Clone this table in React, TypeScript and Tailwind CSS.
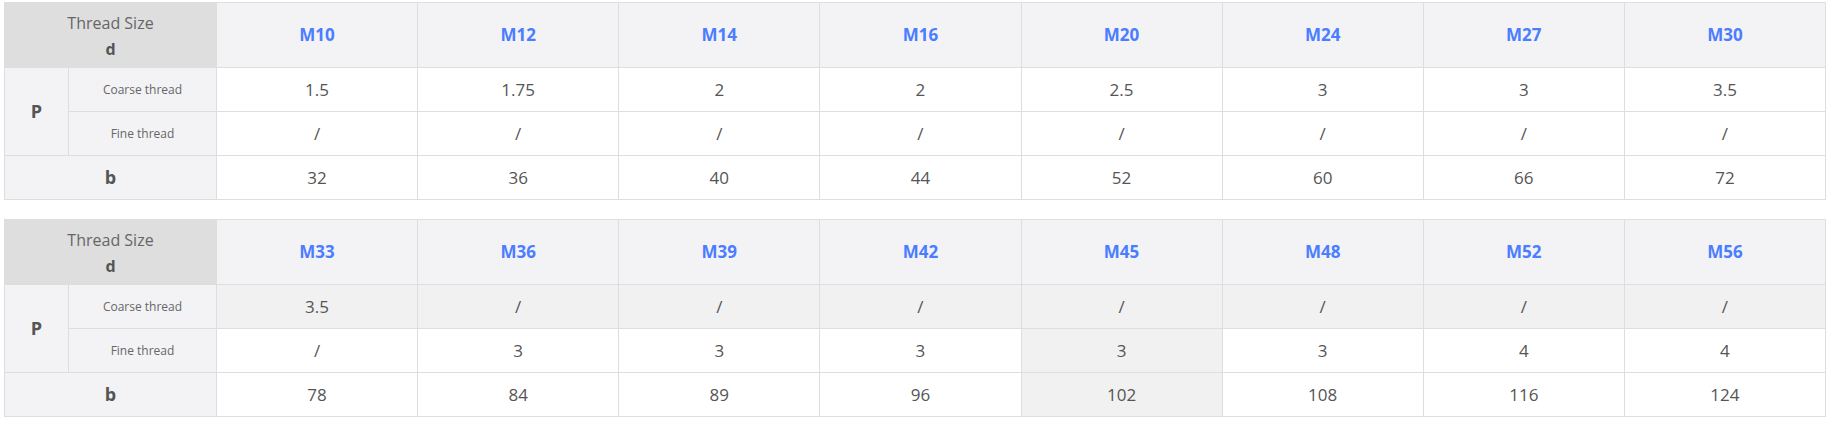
import React from "react";

type Spec = {
  sizes: string[];
  coarse: string[];
  fine: string[];
  b: string[];
  hoverRow?: "coarse";
  hoverCol?: number;
};

const tables: Spec[] = [
  {
    sizes: ["M10", "M12", "M14", "M16", "M20", "M24", "M27", "M30"],
    coarse: ["1.5", "1.75", "2", "2", "2.5", "3", "3", "3.5"],
    fine: ["/", "/", "/", "/", "/", "/", "/", "/"],
    b: ["32", "36", "40", "44", "52", "60", "66", "72"],
  },
  {
    sizes: ["M33", "M36", "M39", "M42", "M45", "M48", "M52", "M56"],
    coarse: ["3.5", "/", "/", "/", "/", "/", "/", "/"],
    fine: ["/", "3", "3", "3", "3", "3", "4", "4"],
    b: ["78", "84", "89", "96", "102", "108", "116", "124"],
    hoverRow: "coarse",
    hoverCol: 4,
  },
];

const cell = "border border-[#dedede] text-center align-middle";

function ThreadTable({ spec }: { spec: Spec }) {
  const val = (row: "coarse" | "fine" | "b", i: number) => {
    const inRow = spec.hoverRow === row;
    const hot = inRow || spec.hoverCol === i;
    const edge = inRow && i > 0 ? "border-l-[#f1f1f1]" : "";
    return `${cell} ${edge} text-[17px] text-[#555] ${hot ? "bg-[#f1f1f1]" : "bg-white"}`;
  };

  return (
    <table className="w-[1822px] table-fixed border-collapse">
      <colgroup>
        <col className="w-[64px]" />
        <col className="w-[148px]" />
        {spec.sizes.map((s) => (
          <col key={s} />
        ))}
      </colgroup>
      <tbody>
        <tr className="h-[65px]">
          <td colSpan={2} className={`${cell} bg-[#dedede] text-[16px] text-[#666]`}>
            <div className="leading-[28px]">Thread Size</div>
            <div className="leading-[24px] font-bold text-[#555]">d</div>
          </td>
          {spec.sizes.map((s) => (
            <td key={s} className={`${cell} bg-[#f3f3f6] text-[17px] font-bold text-[#4a7dff]`}>
              {s}
            </td>
          ))}
        </tr>
        <tr className="h-[44px]">
          <td rowSpan={2} className={`${cell} bg-[#f3f3f6] text-[18px] font-bold text-[#555]`}>
            P
          </td>
          <td className={`${cell} bg-[#f3f3f6] text-[12px] text-[#666]`}>Coarse thread</td>
          {spec.coarse.map((v, i) => (
            <td key={i} className={val("coarse", i)}>
              {v}
            </td>
          ))}
        </tr>
        <tr className="h-[44px]">
          <td className={`${cell} bg-[#f3f3f6] text-[12px] text-[#666]`}>Fine thread</td>
          {spec.fine.map((v, i) => (
            <td key={i} className={val("fine", i)}>
              {v}
            </td>
          ))}
        </tr>
        <tr className="h-[44px]">
          <td colSpan={2} className={`${cell} bg-[#f3f3f6] text-[18px] font-bold text-[#555]`}>
            b
          </td>
          {spec.b.map((v, i) => (
            <td key={i} className={val("b", i)}>
              {v}
            </td>
          ))}
        </tr>
      </tbody>
    </table>
  );
}

export default function App() {
  return (
    <div className="min-h-[422px] bg-white pl-[4px] pt-[2px] font-['Open_Sans',sans-serif]">
      <div className="flex flex-col gap-[19px]">
        {tables.map((t, i) => (
          <ThreadTable key={i} spec={t} />
        ))}
      </div>
    </div>
  );
}
